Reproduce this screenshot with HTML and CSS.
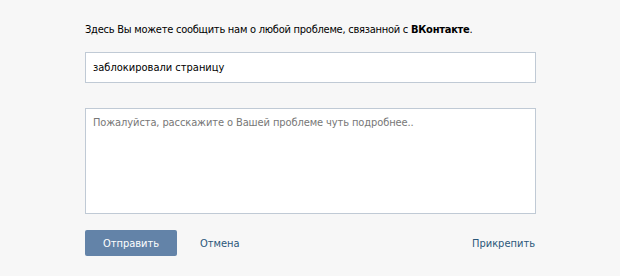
FILE: index.html
```html
<!DOCTYPE html>
<html lang="ru">
<head>
    <meta charset="UTF-8">
    <title>Сообщить о проблеме</title>
    <link rel="stylesheet" href="styles.css">
</head>
<body>
    <div class="container">
        <p class="intro">Здесь Вы можете сообщить нам о любой проблеме, связанной с <b>ВКонтакте</b>.</p>

        <!-- Тема обращения -->
        <input type="text" class="field" value="заблокировали страницу">

        <!-- Подробное описание -->
        <textarea class="field details" placeholder="Пожалуйста, расскажите о Вашей проблеме чуть подробнее.."></textarea>

        <div class="actions">
            <button class="send">Отправить</button>
            <a href="#" class="link cancel">Отмена</a>
            <a href="#" class="link attach">Прикрепить</a>
        </div>
    </div>
</body>
</html>
```

FILE: styles.css
```css
body {
    margin: 0;
    background: #f7f7f7;
    font-family: "DejaVu Sans Condensed", "DejaVu Sans", Tahoma, sans-serif;
    font-stretch: condensed;
    font-size: 11px;
    color: #000;
}
.container {
    width: 451px;
    padding: 23px 85px 0;
}
.intro {
    margin: 0;
    line-height: 14px;
    letter-spacing: -0.25px;
}
.field {
    display: block;
    box-sizing: border-box;
    width: 100%;
    border: 1px solid #c0cad5;
    background: #fff;
    font-family: inherit;
    font-stretch: condensed;
    font-size: 11px;
    color: #000;
    outline: none;
}
input.field {
    margin-top: 15px;
    height: 31px;
    padding: 0 7px;
}
.details {
    margin-top: 25px;
    height: 106px;
    padding: 7px 7px;
    resize: none;
    line-height: 14px;
    letter-spacing: -0.1px;
}
.details::placeholder {
    color: #777;
}
.actions {
    display: flex;
    align-items: center;
    margin-top: 16px;
}
.send {
    width: 92px;
    height: 26px;
    border: 0;
    border-radius: 2px;
    background: #6383a8;
    color: #fff;
    font-family: inherit;
    font-stretch: condensed;
    font-size: 11px;
}
.link {
    color: #2b587a;
    text-decoration: none;
}
.cancel {
    margin-left: 23px;
}
.attach {
    margin-left: auto;
    margin-right: 1px;
}
```
